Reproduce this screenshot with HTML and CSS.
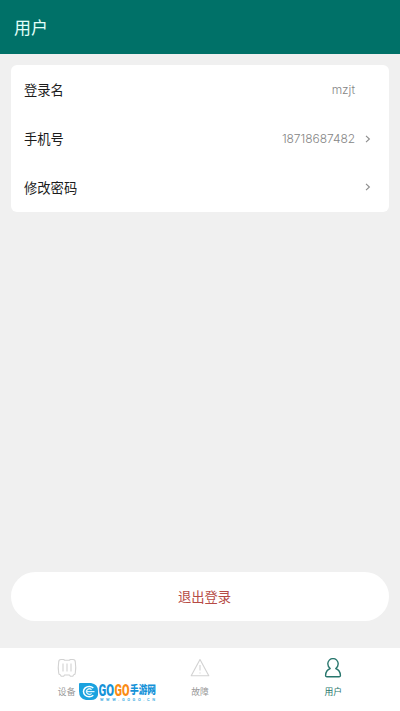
FILE: index.html
```html
<!DOCTYPE html>
<html lang="zh-CN">
<head>
<meta charset="utf-8">
<title>用户</title>
<link rel="stylesheet" href="styles.css">
</head>
<body>
<div class="app">
  <header class="header">用户</header>
  <main class="content">
    <section class="card">
      <div class="row"><span class="label">登录名</span><span class="value">mzjt</span><span class="arrow"></span></div>
      <div class="row"><span class="label">手机号</span><span class="value phone">18718687482</span>
        <svg class="arrow" viewBox="0 0 8 10"><path d="M2 1.8 5.4 5 2 8.2"/></svg></div>
      <div class="row"><span class="label">修改密码</span>
        <svg class="arrow" viewBox="0 0 8 10"><path d="M2 1.8 5.4 5 2 8.2"/></svg></div>
    </section>
    <button class="logout">退出登录</button>
  </main>
  <nav class="tabs">
    <a class="tab">
      <svg class="icon" viewBox="0 0 20 20"><path d="M4 1.5H6.8L7.6 2.3H12.4L13.2 1.5H16Q18.3 1.5 18.3 4Q19.2 9.5 18.3 15Q18.3 16.7 16.7 16.7L15.8 18.3H13.3L12.5 17H7.5L6.7 18.3H4.2L3.3 16.7Q1.7 16.7 1.7 15Q.8 9.5 1.7 4Q1.7 1.5 4 1.5ZM6 5.5V13.5M10 5.5V13.5M14 5.5V13.5"/></svg>
      <span>设备</span>
    </a>
    <a class="tab">
      <svg class="icon" viewBox="0 0 20 20"><path d="M10 1.5 1.2 17.8H18.8ZM10 7V12.5M10 14.5V15.5"/></svg>
      <span>故障</span>
    </a>
    <a class="tab active">
      <svg class="icon" viewBox="0 0 20 20"><path d="M7.2 10.5C5.7 9.4 4.8 7.8 4.8 5.8A5.2 5.2 0 0 1 15.2 5.8C15.2 7.8 14.3 9.4 12.8 10.5C15.7 11.6 17.2 14 17.4 17.2Q17.5 18.8 16 18.8H4Q2.5 18.8 2.6 17.2C2.8 14 4.3 11.6 7.2 10.5Z"/></svg>
      <span>用户</span>
    </a>
  </nav>
  <div class="watermark">
    <svg viewBox="0 0 82 24">
      <path class="badge" d="M3 3H14Q21 4 21 11V15Q20 20 14 20H9Q2 19 2 11V4Q2 3 3 3Z"/>
      <path class="swirl" d="M16.3 8A5.7 5.2 0 1 0 16.3 15.2"/>
      <path class="swirl-in" d="M9.5 11.6H17.5M14.6 9.8A3 2.7 0 1 0 14.6 13.4"/>
      <g transform="scale(1 1.2)">
        <text class="logo blue" x="21.5" y="13" textLength="15.5" lengthAdjust="spacingAndGlyphs">GO</text>
        <text class="logo orange" x="37.5" y="13" textLength="15" lengthAdjust="spacingAndGlyphs">GO</text>
        <text class="logo cn" x="53" y="11.7" textLength="26" lengthAdjust="spacingAndGlyphs">手游网</text>
      </g>
      <text class="url" x="23" y="21.2" textLength="55">WWW.GOGO.CN</text>
    </svg>
  </div>
</div>
</body>
</html>
```
FILE: styles.css
```css
* { box-sizing: border-box; }
body {
  margin: 0;
  font-family: Roboto, "Noto Sans CJK SC", sans-serif;
}
.app {
  position: relative;
  display: flex;
  flex-direction: column;
  height: 711px;
  overflow: hidden;
  background: #f0f0f0;
}
.header {
  height: 54px;
  padding: 2px 14px 0;
  line-height: 52px;
  font-size: 17px;
  color: #e2fffa;
  background: #007168;
}
.content {
  flex: 1;
  display: flex;
  flex-direction: column;
  justify-content: space-between;
  padding: 11px 11px 27px;
}
.card {
  padding-bottom: 1px;
  border-radius: 6px;
  background: #fff;
}
.row {
  display: flex;
  align-items: center;
  height: 49px;
  padding: 0 17px 0 13px;
  font-size: 13.3px;
  color: #1c1c1c;
}
.row:last-child { height: 48px; }
.label { flex: 1; }
.value {
  font-family: Inter, sans-serif;
  font-weight: 300;
  font-size: 12px;
  color: #858585;
}
.phone { letter-spacing: -0.05px; }
.arrow {
  width: 8px;
  height: 10px;
  margin-left: 9px;
  fill: none;
  stroke: #8c8c8c;
  stroke-width: 1.1;
}
.logout {
  height: 49px;
  padding: 0 0 0 9px;
  border: 0;
  border-radius: 25px;
  background: #fff;
  color: #b64b45;
  font: inherit;
  font-size: 13.3px;
}
.tabs {
  display: flex;
  height: 63px;
  background: #fff;
}
.tab {
  flex: 1;
  display: flex;
  flex-direction: column;
  align-items: center;
  padding-top: 10px;
  font-size: 8.8px;
  line-height: 13px;
  color: #999;
}
.icon {
  width: 20px;
  height: 20px;
  margin-bottom: 8px;
  fill: none;
  stroke: #d2d2d2;
  stroke-width: 1.1;
  stroke-linejoin: round;
}
.active { color: #28766d; }
.active .icon { stroke: #28766d; stroke-width: 1.4; }
.watermark {
  position: absolute;
  left: 77px;
  top: 680px;
  width: 82px;
  height: 24px;
}
.watermark svg { display: block; width: 82px; height: 24px; }
.badge { fill: #1ba2df; }
.swirl { fill: none; stroke: #fff; stroke-width: 1.5; }
.swirl-in { fill: none; stroke: #d9f4ff; stroke-width: 1.3; }
.logo { font: 900 13px Roboto, "Noto Sans CJK SC", sans-serif; }
.blue { fill: #1592d8; }
.orange { fill: #fa8b13; }
.cn { font-size: 9.5px; fill: #1592d8; }
.url { font: 700 4px Roboto, sans-serif; fill: #4fb2e4; }
```
